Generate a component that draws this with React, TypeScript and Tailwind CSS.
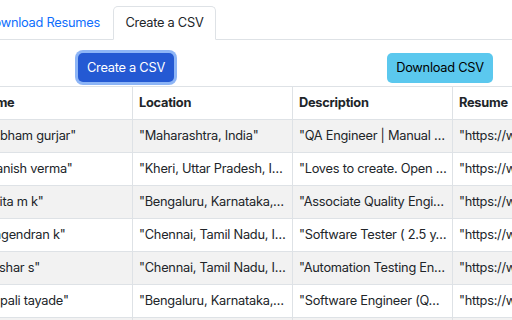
import React from "react";

const rows: [string, string, string, string][] = [
  ['"Subham gurjar"', '"Maharashtra, India"', '"QA Engineer | Manual …', '"https://www.linkedin.com/in/subham-gurjar"'],
  ['"Manish verma"', '"Kheri, Uttar Pradesh, I…', '"Loves to create. Open …', '"https://www.linkedin.com/in/manish-verma"'],
  ['"Anita m k"', '"Bengaluru, Karnataka,…', '"Associate Quality Engi…', '"https://www.linkedin.com/in/anita-m-k"'],
  ['"Nagendran k"', '"Chennai, Tamil Nadu, I…', '"Software Tester ( 2.5 y…', '"https://www.linkedin.com/in/nagendran-k"'],
  ['"Tushar s"', '"Chennai, Tamil Nadu, I…', '"Automation Testing En…', '"https://www.linkedin.com/in/tushar-s"'],
  ['"Rupali tayade"', '"Bengaluru, Karnataka,…', '"Software Engineer (Q…', '"https://www.linkedin.com/in/rupali-tayade"'],
  ['"Pooja sharma"', '"Pune, Maharashtra, In…', '"Quality Analyst"', '"https://www.linkedin.com/in/pooja-sharma"'],
];

const headers = ["Name", "Location", "Description", "Resume"];

export default function App() {
  return (
    <div
      className="w-[512px] h-[320px] overflow-hidden bg-white text-[#212529] text-[12.8px] tracking-[-0.25px]"
      style={{ fontFamily: "Inter, 'Liberation Sans', sans-serif" }}
    >
      <div className="flex h-[40px] items-end border-b border-[#dee2e6] pt-[6px]">
        <div className="flex h-[33px] w-[113px] shrink-0 items-center justify-end pr-[13px] whitespace-nowrap text-[#0d6efd]">
          Download Resumes
        </div>
        <div className="-mb-px flex h-[34px] w-[103px] shrink-0 items-center justify-center rounded-t-[5px] border border-[#dee2e6] border-b-white bg-white whitespace-nowrap">
          Create a CSV
        </div>
      </div>

      <div className="flex items-start justify-between pl-[78px] pr-[19px] pt-[13px] pb-[3px]">
        <button className="flex h-[29px] w-[96px] items-center justify-center rounded-[5px] bg-[#2459d3] text-white ring-[3px] ring-[#8db5f6] whitespace-nowrap">
          Create a CSV
        </button>
        <button className="flex h-[30px] w-[106px] items-center justify-center rounded-[5px] bg-[#5bc8ee] text-black whitespace-nowrap">
          Download CSV
        </button>
      </div>

      <table className="-ml-[28px] w-[640px] table-fixed border-collapse">
        <thead>
          <tr>
            {headers.map((h) => (
              <th key={h} className="w-[160px] border border-[#dee2e6] p-0 text-left font-bold">
                <div className="h-[32px] overflow-hidden whitespace-nowrap px-[6px] leading-[32px]">{h}</div>
              </th>
            ))}
          </tr>
        </thead>
        <tbody>
          {rows.map((r, i) => (
            <tr key={i} className={i % 2 === 0 ? "bg-[#f2f2f2]" : "bg-white"}>
              {r.map((c, j) => (
                <td key={j} className="w-[160px] border border-[#dee2e6] p-0">
                  <div className="h-[32px] overflow-hidden whitespace-nowrap px-[6px] leading-[32px]">{c}</div>
                </td>
              ))}
            </tr>
          ))}
        </tbody>
      </table>
    </div>
  );
}
